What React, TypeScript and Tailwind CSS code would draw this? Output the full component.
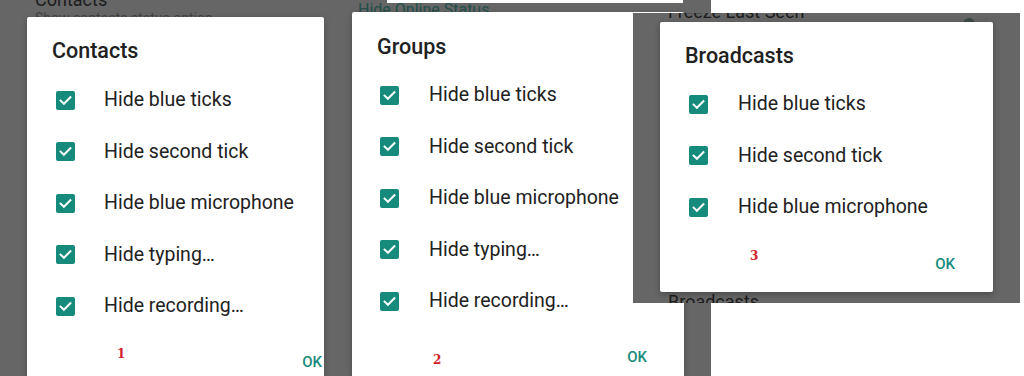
import React from "react";

const font = { fontFamily: "Roboto, 'Noto Sans', Arial, sans-serif" };

function Check() {
  return (
    <div className="w-[19px] h-[19px] rounded-[2px] bg-[#168b7c] flex items-center justify-center shrink-0">
      <svg width="19" height="19" viewBox="0 0 19 19">
        <path d="M4.6 9.6 L7.9 12.8 L14.4 6.2" fill="none" stroke="#ffffff" strokeWidth="2" strokeLinecap="square" />
      </svg>
    </div>
  );
}

function Row({ label, cbLeft, gap }: { label: string; cbLeft: string; gap: string }) {
  return (
    <div className={`h-[51.5px] flex items-center ${cbLeft}`}>
      <Check />
      <span className={`${gap} text-[19.5px] leading-[22px] text-[#212121] whitespace-nowrap`}>{label}</span>
    </div>
  );
}

function Num({ n, extra }: { n: string; extra: string }) {
  return (
    <div
      className={`block text-[12px] leading-[10px] font-bold text-[#d0202a] ${extra}`}
      style={{ fontFamily: "'DejaVu Serif', serif" }}
    >
      {n}
    </div>
  );
}

function Ok({ extra }: { extra: string }) {
  return <div className={`text-[15px] leading-[16px] font-medium text-[#168b7c] ${extra}`}>OK</div>;
}

const all = ["Hide blue ticks", "Hide second tick", "Hide blue microphone", "Hide typing…", "Hide recording…"];

export default function App() {
  return (
    <div className="w-[1024px] h-[376px] bg-white relative overflow-hidden flex" style={font}>
      {/* Panel 1 */}
      <div className="w-[338px] h-full bg-[#666666] flex flex-col overflow-hidden shrink-0">
        <div className="h-[17px] shrink-0">
          <div className="pl-[35px] -mt-[10px] text-[18px] leading-[20px] text-[#1c1c1c] whitespace-nowrap">Contacts</div>
          <div className="pl-[35px] text-[14px] leading-[16px] text-[#444444] whitespace-nowrap">Show contacts status option</div>
        </div>
        <div className="relative ml-[27px] w-[297px] flex-1 bg-white rounded-t-[2px] flex flex-col shadow-[0_2px_6px_rgba(0,0,0,0.25)]">
          <div className="pt-[22px] pl-[25px] h-[46px] text-[21.5px] leading-[24px] font-medium text-[#212121]">Contacts</div>
          <div className="mt-[11.25px] flex flex-col">
            {all.map((l) => (
              <Row key={l} label={l} cbLeft="pl-[29px]" gap="ml-[29px]" />
            ))}
          </div>
          <div className="flex justify-between items-start">
            <Num n="1" extra="mt-[17px] ml-[90px]" />
            <Ok extra="mt-[22px] mr-[2px]" />
          </div>
        </div>
      </div>

      {/* Panel 2 */}
      <div className="w-[373px] h-full bg-[#666666] flex flex-col overflow-hidden shrink-0">
        <div className="h-[3px] ml-[49px] w-[296px] bg-white shrink-0" />
        <div className="h-[9px] shrink-0">
          <div className="pl-[20px] -mt-[2px] text-[16px] leading-[18px] text-[#23504b] whitespace-nowrap">Hide Online Status</div>
        </div>
        <div className="relative ml-[14px] w-[332px] flex-1 bg-white rounded-t-[2px] flex flex-col shadow-[0_2px_6px_rgba(0,0,0,0.25)]">
          <div className="pt-[23px] pl-[25px] h-[47px] text-[21.5px] leading-[24px] font-medium text-[#212121]">Groups</div>
          <div className="mt-[10.25px] flex flex-col">
            {all.map((l) => (
              <Row key={l} label={l} cbLeft="pl-[28px]" gap="ml-[30px]" />
            ))}
          </div>
          <div className="flex justify-between items-start">
            <Num n="2" extra="mt-[28px] ml-[81px]" />
            <Ok extra="mt-[22px] mr-[37px]" />
          </div>
        </div>
      </div>

      <div className="flex-1 bg-white" />

      {/* Panel 3 (overlapping screenshot) */}
      <div className="absolute left-[633px] top-[13px] w-[387px] h-[290px] bg-[#666666] flex flex-col overflow-hidden">
        <div className="h-[9px] shrink-0 flex justify-between">
          <div className="pl-[35px] -mt-[11px] text-[18px] leading-[20px] text-[#1c1c1c] whitespace-nowrap">Freeze Last Seen</div>
          <div className="w-[12px] h-[12px] rounded-full bg-[#3d4a48] mt-[5px] mr-[45px]" />
        </div>
        <div className="relative ml-[27px] w-[333px] h-[270px] shrink-0 bg-white rounded-[2px] flex flex-col shadow-[0_2px_6px_rgba(0,0,0,0.3)]">
          <div className="pt-[22px] pl-[25px] h-[46px] text-[21.5px] leading-[24px] font-medium text-[#212121]">Broadcasts</div>
          <div className="mt-[10.25px] flex flex-col">
            {all.slice(0, 3).map((l) => (
              <Row key={l} label={l} cbLeft="pl-[29px]" gap="ml-[30px]" />
            ))}
          </div>
          <div className="flex justify-between items-start">
            <Num n="3" extra="mt-[18px] ml-[90px]" />
            <Ok extra="mt-[23px] mr-[38px]" />
          </div>
        </div>
        <div className="pl-[35px] text-[18px] leading-[20px] text-[#1c1c1c] whitespace-nowrap">Broadcasts</div>
      </div>
    </div>
  );
}
